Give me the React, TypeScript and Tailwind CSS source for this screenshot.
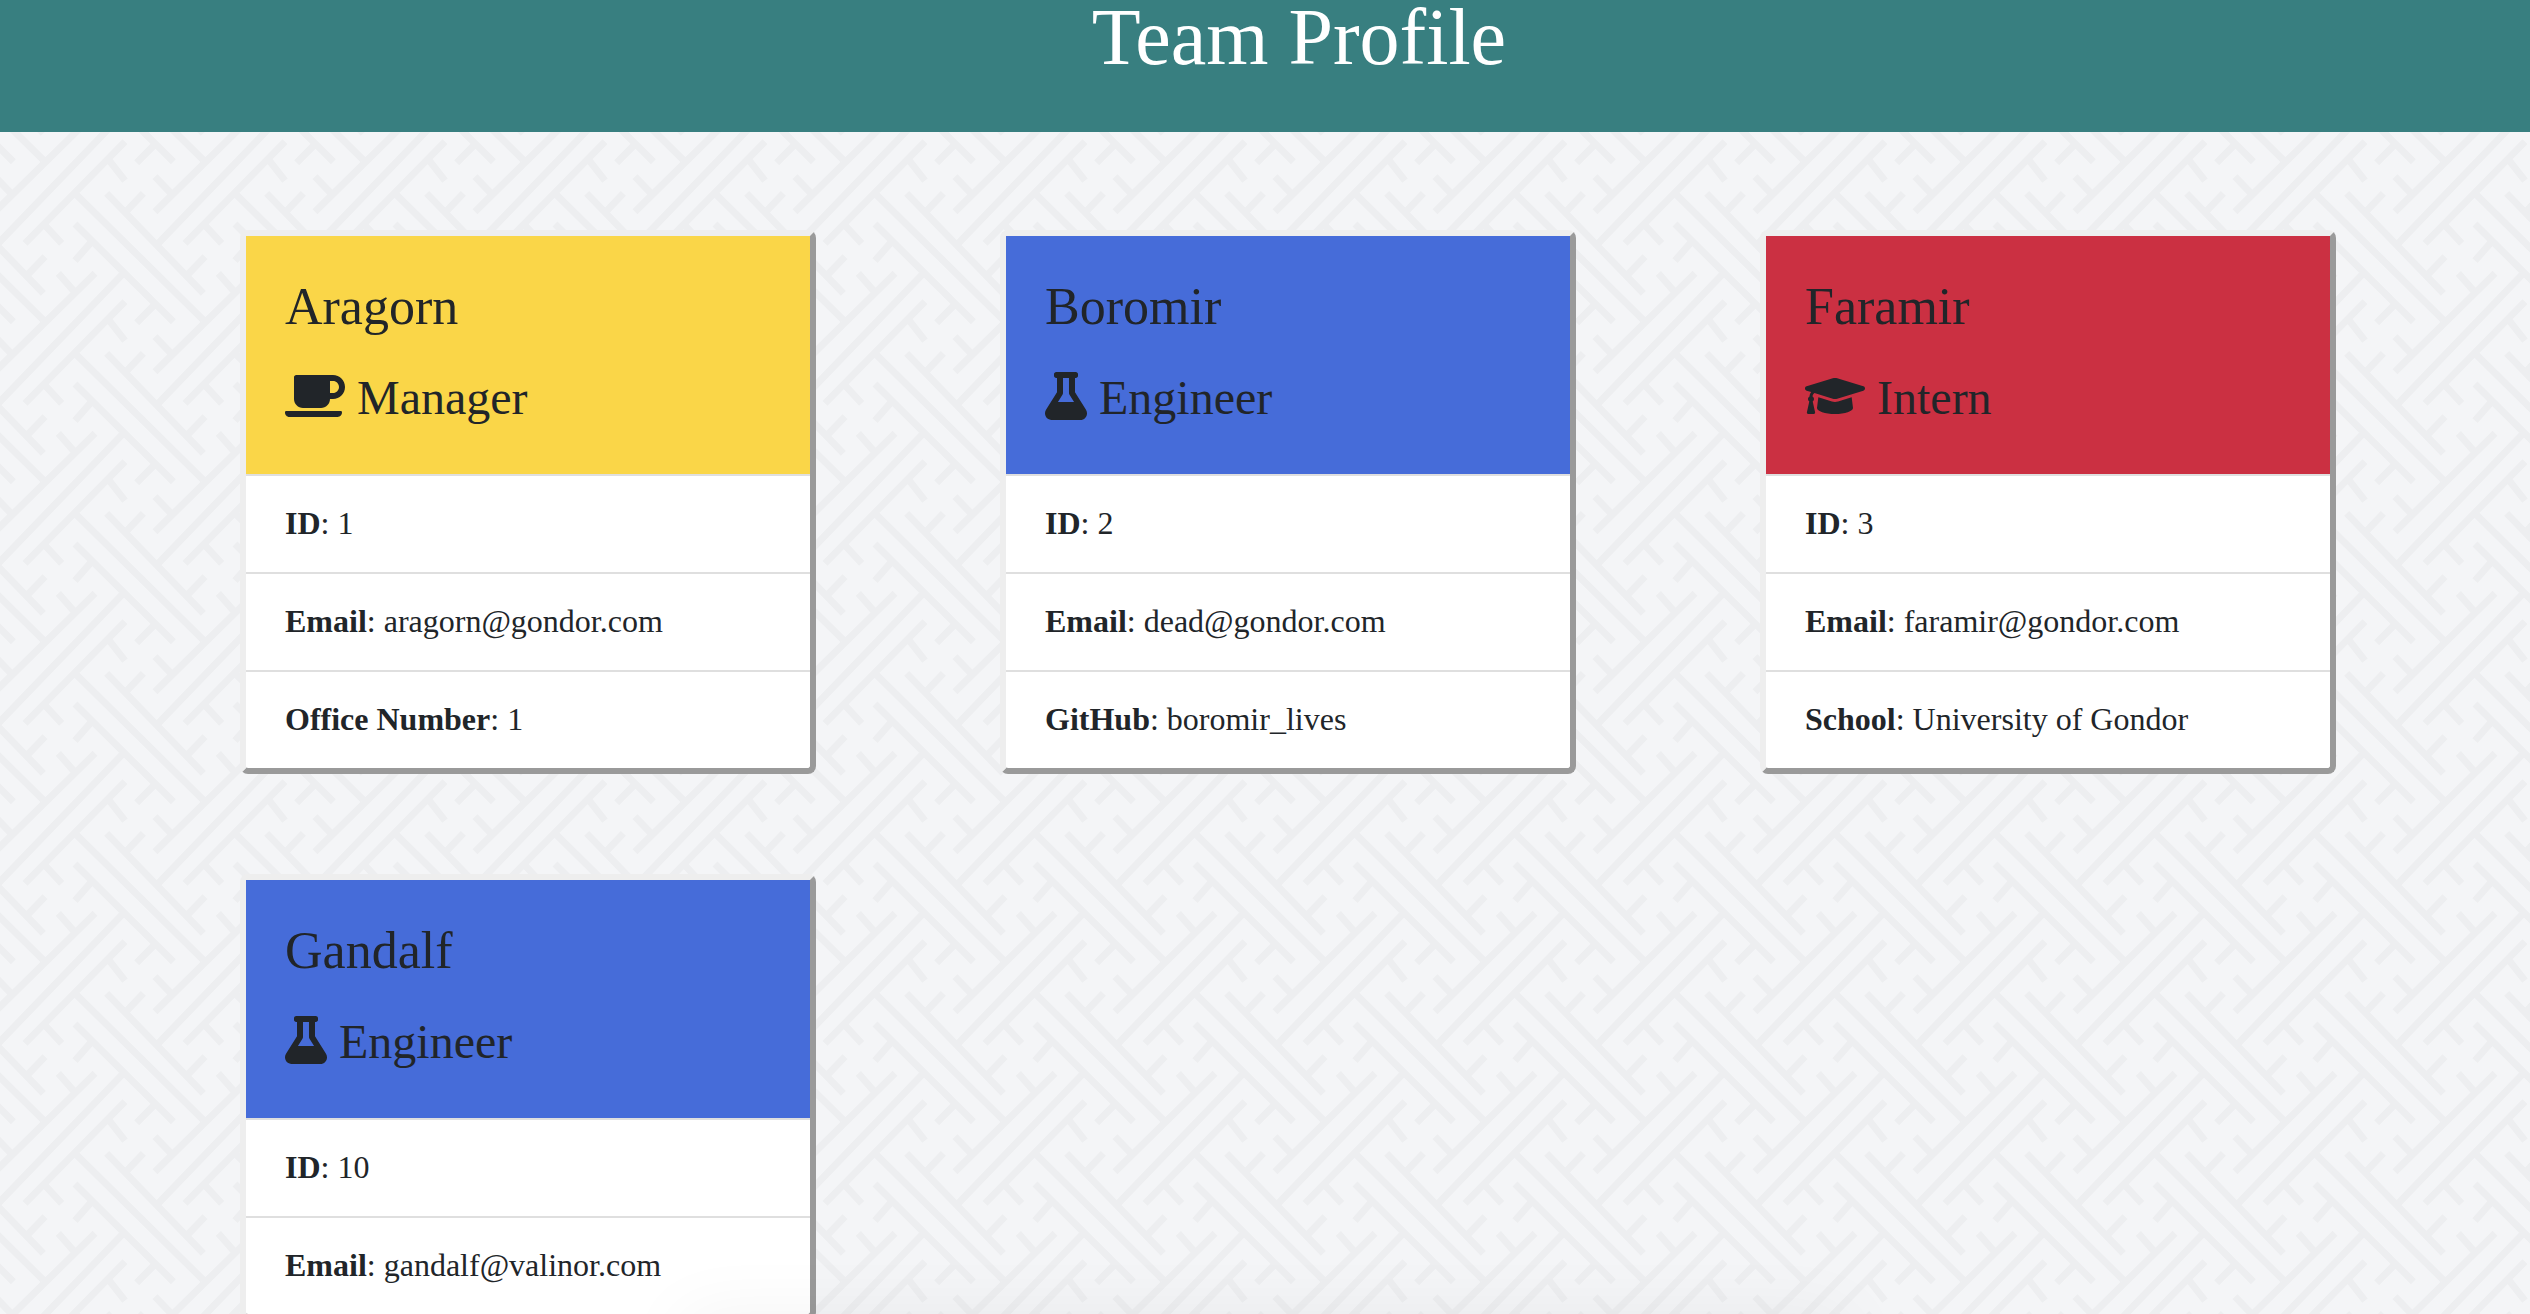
import React from "react";
import { FaCoffee, FaFlask, FaGraduationCap } from "react-icons/fa";
import type { IconType } from "react-icons";

type Role = "Manager" | "Engineer" | "Intern";

interface Member {
  name: string;
  role: Role;
  details: { label: string; value: string }[];
}

const roles: Record<Role, { icon: IconType; header: string; iconWidth: string }> = {
  Manager: { icon: FaCoffee, header: "bg-[#fad648]", iconWidth: "w-[60px]" },
  Engineer: { icon: FaFlask, header: "bg-[#466cd9]", iconWidth: "w-[42px]" },
  Intern: { icon: FaGraduationCap, header: "bg-[#cb3042]", iconWidth: "w-[60px]" },
};

const members: Member[] = [
  {
    name: "Aragorn",
    role: "Manager",
    details: [
      { label: "ID", value: "1" },
      { label: "Email", value: "aragorn@gondor.com" },
      { label: "Office Number", value: "1" },
    ],
  },
  {
    name: "Boromir",
    role: "Engineer",
    details: [
      { label: "ID", value: "2" },
      { label: "Email", value: "dead@gondor.com" },
      { label: "GitHub", value: "boromir_lives" },
    ],
  },
  {
    name: "Faramir",
    role: "Intern",
    details: [
      { label: "ID", value: "3" },
      { label: "Email", value: "faramir@gondor.com" },
      { label: "School", value: "University of Gondor" },
    ],
  },
  {
    name: "Gandalf",
    role: "Engineer",
    details: [
      { label: "ID", value: "10" },
      { label: "Email", value: "gandalf@valinor.com" },
    ],
  },
];

const LATTICE =
  "M375 65L75 370M325 118L375 182M133 314L185 370" +
  "M230 225L610 600" +
  "M320 220L610 520M378 275L430 220M565 462L615 410" +
  "M225 312L520 605M275 365L225 422M465 553L410 608" +
  "M465 275L765 -20M515 222L465 170M703 35L655 -20" +
  "M475 370L850 -20";

const OFFSETS = [-480, 0, 480];

/** Repeating woven-lattice wallpaper behind the cards. */
function Wallpaper() {
  return (
    <svg aria-hidden="true" className="absolute inset-0 h-full w-full">
      <defs>
        <pattern id="lattice" x="0" y="-12" width="160" height="160" patternUnits="userSpaceOnUse" viewBox="0 0 480 480">
          <g fill="none" stroke="#edeef0" strokeWidth="21">
            {OFFSETS.map((dx) =>
              OFFSETS.map((dy) => <path key={`${dx},${dy}`} d={LATTICE} transform={`translate(${dx} ${dy})`} />)
            )}
          </g>
        </pattern>
      </defs>
      <rect width="100%" height="100%" fill="url(#lattice)" />
    </svg>
  );
}

function MemberCard({ member }: { member: Member }) {
  const { icon: Icon, header, iconWidth } = roles[member.role];
  return (
    <article className="rounded-lg border-6 border-t-[#eeeeee] border-r-[#9a9a9a] border-b-[#9a9a9a] border-l-[#eeeeee] bg-white">
      <header className={`px-[39px] pt-10 pb-[47px] ${header}`}>
        <h2 className="text-[52px] leading-[62px]">{member.name}</h2>
        <h3 className="mt-[31px] flex items-start gap-3 text-[48px] leading-[58px]">
          <Icon aria-hidden="true" className={`mt-[3px] h-12 shrink-0 ${iconWidth}`} />
          {member.role}
        </h3>
      </header>
      <ul>
        {member.details.map((d) => (
          <li key={d.label} className="border-t-2 border-[#dfdfdf] px-[39px] pt-[23px] pb-[25px] text-[32px] leading-[48px]">
            <strong className="font-bold">{d.label}</strong>: {d.value}
          </li>
        ))}
      </ul>
    </article>
  );
}

export default function App() {
  return (
    <div className="flex h-screen flex-col overflow-hidden bg-[#f4f5f7] font-['Liberation_Serif',serif] text-[#212529]">
      <header className="shrink-0 bg-[#387f80] pb-[58px] pl-[68px] text-center text-white">
        <h1 className="text-[80px] leading-[74px]">Team Profile</h1>
      </header>
      <main className="relative min-h-0 flex-1 overflow-hidden">
        <Wallpaper />
        <div className="relative mx-auto grid max-w-[2280px] grid-cols-3 items-start gap-y-[100px] pt-[98px]">
          {members.map((m) => (
            <div key={m.name} className="pr-[69px] pl-[115px]">
              <MemberCard member={m} />
            </div>
          ))}
        </div>
        <div
          aria-hidden="true"
          className="pointer-events-none absolute inset-x-[27%] top-full h-20 shadow-[0_0_70px_rgba(0,0,0,0.05)]"
        />
      </main>
    </div>
  );
}
